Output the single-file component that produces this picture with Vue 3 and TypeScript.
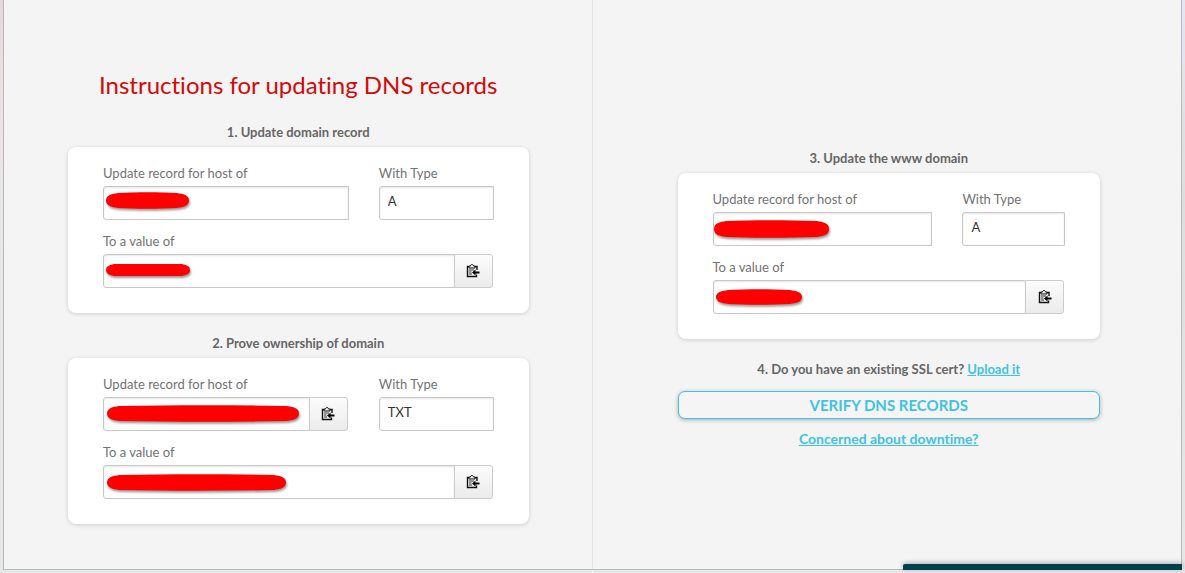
<script setup lang="ts">
interface Mark { x: number; y: number; w: number; h: number }
interface Field { id: string; label: string; value: string; copy: boolean; mark?: Mark }
interface RecordCard { title: string; fields: Field[] }

const makeCard = (
  key: string, title: string, type: string, copyHost: boolean, host: Mark, value: Mark,
): RecordCard => ({
  title,
  fields: [
    { id: `${key}-host`, label: 'Update record for host of', value: '', copy: copyHost, mark: host },
    { id: `${key}-type`, label: 'With Type', value: type, copy: false },
    { id: `${key}-value`, label: 'To a value of', value: '', copy: true, mark: value },
  ],
})

const columns: RecordCard[][] = [
  [
    makeCard('domain', '1. Update domain record', 'A', false,
      { x: 3, y: 6, w: 83, h: 17 }, { x: 3, y: 10, w: 84, h: 12 }),
    makeCard('owner', '2. Prove ownership of domain', 'TXT', true,
      { x: 4, y: 8, w: 192, h: 17 }, { x: 4, y: 9, w: 179, h: 17 }),
  ],
  [
    makeCard('www', '3. Update the www domain', 'A', false,
      { x: 1, y: 8, w: 115, h: 18 }, { x: 3, y: 9, w: 86, h: 16 }),
  ],
]

const markPath = ({ w, h }: Mark): string => {
  const e = Math.round(h * 0.35)
  const t = h < 14 ? 1 : 2
  return `M0 ${h / 2}C0 ${t + 1} ${e} ${t} ${e * 2} ${t - 1}C${w * 0.35} 0 ${w * 0.65} 0 ${w - e * 2} ${t - 1}`
    + `C${w - e} ${t} ${w} ${t + 1} ${w} ${h / 2}C${w} ${h - t - 1} ${w - e} ${h - t} ${w - e * 2} ${h - t + 1}`
    + `C${w * 0.65} ${h} ${w * 0.35} ${h} ${e * 2} ${h - t + 1}C${e} ${h - t} 0 ${h - t - 1} 0 ${h / 2}Z`
}
</script>

<template>
  <div class="page">
    <main class="frame">
      <section v-for="(cards, c) in columns" :key="c" class="column" :class="c === 0 ? 'first' : 'second'">
        <h1 v-if="c === 0">Instructions for updating DNS records</h1>
        <template v-for="card in cards" :key="card.title">
          <h2>{{ card.title }}</h2>
          <div class="card">
            <div v-for="f in card.fields" :key="f.id" class="field" :class="{ wide: f.id.endsWith('value') }">
              <label :for="f.id">{{ f.label }}</label>
              <div class="group" :class="{ copyable: f.copy }">
                <input :id="f.id" type="text" :value="f.value" readonly />
                <button v-if="f.copy" type="button" class="copy" aria-label="Copy to clipboard">
                  <svg width="14" height="14" viewBox="0 0 14 14" fill="none">
                    <path d="M3 2.500H1.500V12.500H10.500V10.500M9 2.500H11V6" stroke="#111" stroke-width="1.400" />
                    <path d="M3 4V2H4.500C4.500 0 7.500 0 7.500 2H9V4Z" fill="#eee" stroke="#111" />
                    <path d="M3 6H8M3 8H5.500M3 10H6" stroke="#333" />
                    <path d="M13.500 8.500H8" stroke="#000" stroke-width="2" />
                    <path d="M6 8.500L9.500 5.500V11.500Z" fill="#000" />
                  </svg>
                </button>
                <svg
                  v-if="f.mark" class="mark" aria-hidden="true"
                  :width="f.mark.w" :height="f.mark.h"
                  :style="{ left: f.mark.x + 'px', top: f.mark.y + 'px' }"
                >
                  <path :d="markPath(f.mark)" fill="#f00" />
                </svg>
              </div>
            </div>
          </div>
        </template>
        <template v-if="c === 1">
          <h2>4. Do you have an existing SSL cert? <a href="#">Upload it</a></h2>
          <button type="button" class="verify">VERIFY DNS RECORDS</button>
          <a href="#" class="concern">Concerned about downtime?</a>
        </template>
      </section>
      <div class="dock"></div>
    </main>
  </div>
</template>

<style>
body { margin: 0; }
</style>

<style scoped>
* { box-sizing: border-box; }
.page {
  min-height: 100vh;
  display: flex;
  padding: 0 3px 3px;
  background:
    linear-gradient(#e4d9da, #ece4e4 120px, #e6e8e8 260px) left / 50% 100% no-repeat,
    linear-gradient(#e6e6ee, #dedede 200px, #e6e8e8) right / 50% 100% no-repeat;
  font-family: Lato, "Liberation Sans", sans-serif;
  font-variant-ligatures: none;
  color: #666;
}
.frame {
  position: relative;
  flex: 1;
  display: grid;
  grid-template-columns: minmax(0, 1fr) minmax(0, 1fr);
  background: #f4f4f4;
  border: 1px solid #b9b9b9;
  border-top: 0;
}
.column {
  display: flex;
  flex-direction: column;
  text-align: center;
}
.first { padding: 67px 63px 20px 64px; border-right: 1px solid #e4e4e4; }
.second { padding: 148px 81px 20px 85px; }
h1 {
  margin: 0 0 19px;
  font-size: 24px;
  line-height: 36px;
  font-weight: 400;
  color: #d20a0a;
}
h2 {
  margin: 0 0 5px;
  font-size: 13px;
  line-height: 20px;
  font-weight: 700;
}
a { color: #3fc3e2; }
.card {
  display: grid;
  grid-template-columns: 15fr 7fr;
  gap: 11px 30px;
  padding: 16px 35px 25px;
  margin-bottom: 20px;
  background: #fff;
  border-radius: 8px;
  box-shadow: 0 1px 4px rgba(0, 0, 0, 0.16);
  text-align: left;
}
.field { min-width: 0; }
.wide { grid-column: 1 / -1; }
label {
  display: block;
  margin-bottom: 3px;
  font-size: 13px;
  line-height: 20px;
  color: #737373;
}
.group { position: relative; display: flex; }
.copyable { margin-right: 1px; }
input {
  flex: 1;
  min-width: 0;
  height: 34px;
  padding: 0 8px 4px;
  border: 1px solid #c8c8c8;
  border-radius: 3px 0 0 3px;
  background: #fff;
  box-shadow: inset 0 1px 2px rgba(0, 0, 0, 0.1);
  font: 13px Lato, "Liberation Sans", sans-serif;
  color: #333;
}
.copy {
  display: flex;
  align-items: center;
  justify-content: center;
  width: 39px;
  height: 34px;
  margin-left: -1px;
  padding: 0;
  border: 1px solid #ccc;
  border-radius: 0 3px 3px 0;
  background: linear-gradient(#fcfcfc, #ebebeb);
}
.mark {
  position: absolute;
  overflow: visible;
  filter: drop-shadow(1px 2px 1px rgba(0, 0, 0, 0.4));
}
.verify {
  height: 28px;
  margin: 7px 0 10px;
  padding: 0;
  border: 1px solid #3fc3e2;
  border-radius: 7px;
  background: #f5f5f5;
  box-shadow: 0 1px 4px rgba(0, 0, 0, 0.3);
  font: 700 15px/20px Lato, "Liberation Sans", sans-serif;
  color: #3fc3e2;
}
.concern {
  align-self: center;
  font-size: 14px;
  line-height: 20px;
  font-weight: 700;
}
.dock {
  position: absolute;
  right: -1px;
  bottom: -1px;
  width: 279px;
  height: 6px;
  background: #00404d;
  border-radius: 2px 0 0 0;
  box-shadow: 0 -1px 5px rgba(0, 0, 0, 0.3);
}
</style>
